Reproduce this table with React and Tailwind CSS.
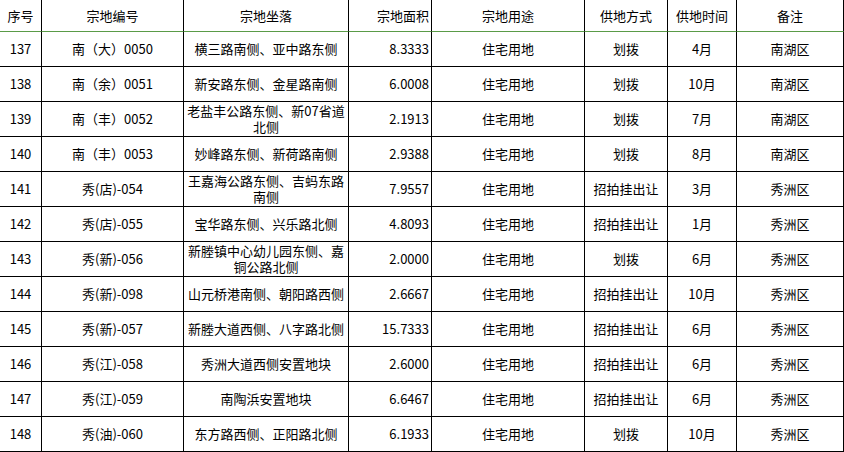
const rows = [
  ["137", "南（大）0050", ["横三路南侧、亚中路东侧"], "8.3333", "住宅用地", "划拨", "4月", "南湖区"],
  ["138", "南（余）0051", ["新安路东侧、金星路南侧"], "6.0008", "住宅用地", "划拨", "10月", "南湖区"],
  ["139", "南（丰）0052", ["老盐丰公路东侧、新07省道", "北侧"], "2.1913", "住宅用地", "划拨", "7月", "南湖区"],
  ["140", "南（丰）0053", ["妙峰路东侧、新荷路南侧"], "2.9388", "住宅用地", "划拨", "8月", "南湖区"],
  ["141", "秀(店)-054", ["王嘉海公路东侧、吉蚂东路", "南侧"], "7.9557", "住宅用地", "招拍挂出让", "3月", "秀洲区"],
  ["142", "秀(店)-055", ["宝华路东侧、兴乐路北侧"], "4.8093", "住宅用地", "招拍挂出让", "1月", "秀洲区"],
  ["143", "秀(新)-056", ["新塍镇中心幼儿园东侧、嘉", "铜公路北侧"], "2.0000", "住宅用地", "划拨", "6月", "秀洲区"],
  ["144", "秀(新)-098", ["山元桥港南侧、朝阳路西侧"], "2.6667", "住宅用地", "招拍挂出让", "10月", "秀洲区"],
  ["145", "秀(新)-057", ["新塍大道西侧、八字路北侧"], "15.7333", "住宅用地", "招拍挂出让", "6月", "秀洲区"],
  ["146", "秀(江)-058", ["秀洲大道西侧安置地块"], "2.6000", "住宅用地", "招拍挂出让", "6月", "秀洲区"],
  ["147", "秀(江)-059", ["南陶浜安置地块"], "6.6467", "住宅用地", "招拍挂出让", "6月", "秀洲区"],
  ["148", "秀(油)-060", ["东方路西侧、正阳路北侧"], "6.1933", "住宅用地", "划拨", "10月", "秀洲区"],
];

const headers = ["序号", "宗地编号", "宗地坐落", "宗地面积", "宗地用途", "供地方式", "供地时间", "备注"];

export default function App() {
  return (
    <div
      className="w-[844px] h-[452px] bg-white text-black text-[13px] overflow-hidden"
      style={{ fontFamily: '"Noto Sans CJK SC", "Liberation Sans", sans-serif' }}
    >
      <div className="grid grid-cols-[42px_142px_165px_83px_153px_83px_69px_107px]">
        {headers.map((h, i) => (
          <div
            key={h}
            className={`h-[32px] border-r border-r-black border-b border-b-[#5a9b47] flex items-center ${
              i === 3 ? "justify-end pr-[2px]" : "justify-center"
            }`}
          >
            {h}
          </div>
        ))}

        {rows.map((r) =>
          r.map((cell, i) => (
            <div
              key={r[0] + "-" + i}
              className={`h-[35px] border-r border-b border-black flex items-center ${
                i === 3 ? "justify-end pr-[2px]" : "justify-center"
              }`}
            >
              {i === 2 ? (
                <div className="text-center leading-[16px]">
                  {cell.map((line) => (
                    <div key={line}>{line}</div>
                  ))}
                </div>
              ) : (
                cell
              )}
            </div>
          ))
        )}
      </div>
    </div>
  );
}
